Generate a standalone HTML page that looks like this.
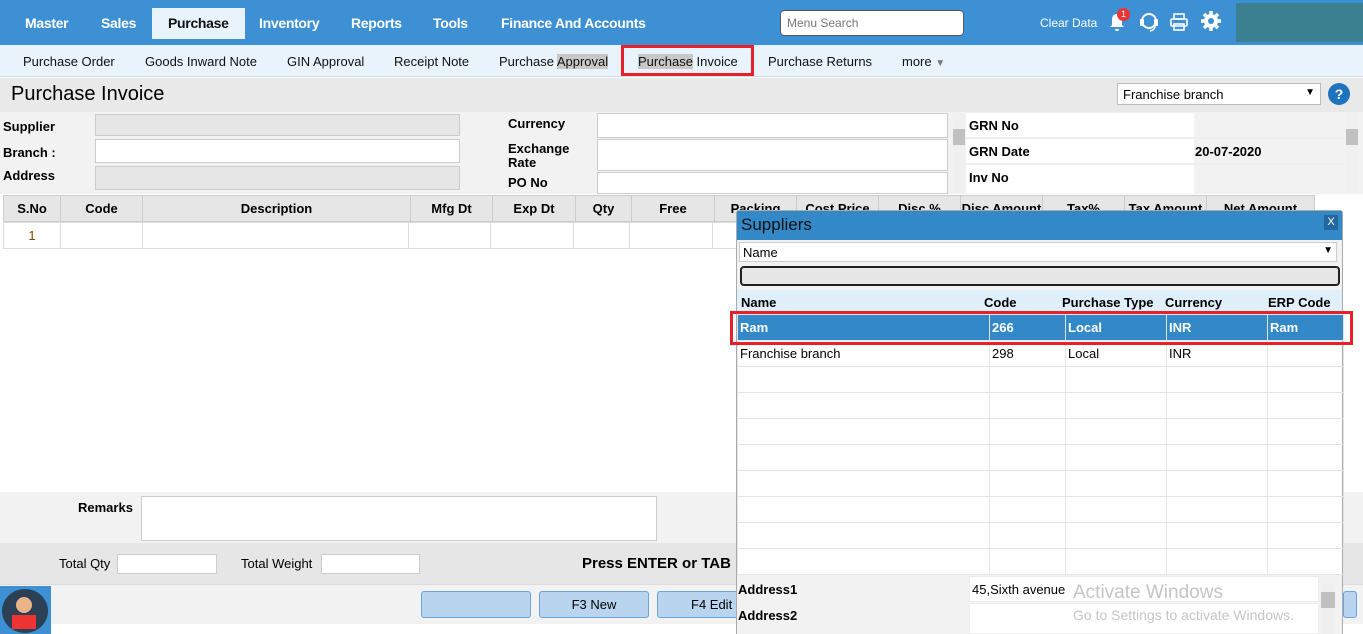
<!DOCTYPE html><html><head><style>
*{box-sizing:border-box;margin:0;padding:0}
body{width:1363px;height:634px;overflow:hidden;position:relative;font-family:"Liberation Sans",Arial,sans-serif;font-size:13px;background:#fff;color:#000}
.a{position:absolute}
.nav{left:0;top:0;width:1363px;height:45px;background:#3d90d4}
.nav span{position:absolute;top:15px;color:#fff;font-weight:bold;font-size:14px;letter-spacing:-0.3px}
.sub{left:0;top:45px;width:1363px;height:32px;background:#e8f3fb;border-bottom:1px solid #c8dcea}
.sub span{position:absolute;top:9px;font-size:13px;color:#111}
.lbl{font-weight:bold;font-size:13px}
.inp{background:#fff;border:1px solid #ccc}
.g{background:#e6e6e6}
table{border-collapse:collapse}
.th td{border:1px solid #ccc;text-align:center;font-weight:bold;height:26px}
.mt td{border:1px solid #e4e4e4;height:26px;padding-left:2px;font-size:13px}
</style></head><body>
<div class="a nav">
<span style="left:25px">Master</span><span style="left:101px">Sales</span>
<div class="a" style="left:152px;top:8px;width:93px;height:31px;background:#e8f3fb"></div>
<span style="left:168px;color:#111">Purchase</span>
<span style="left:259px">Inventory</span><span style="left:351px">Reports</span><span style="left:433px">Tools</span><span style="left:501px">Finance And Accounts</span>
<div class="a" style="left:780px;top:10px;width:184px;height:26px;background:#fff;border:1px solid #555;border-radius:4px;color:#777;font-size:12px;padding:5px 6px">Menu Search</div>
<span style="left:1040px;font-weight:normal;font-size:12px;top:16px;letter-spacing:0">Clear Data</span>
<svg class="a" style="left:1107px;top:11px" width="20" height="22" viewBox="0 0 20 22"><path d="M10 3c-4 0-5 3-5 6v5l-2 2h14l-2-2V9c0-3-1-6-5-6zM8 18a2 2 0 004 0z" fill="#fff"/></svg>
<div class="a" style="left:1117px;top:8px;width:13px;height:13px;border-radius:50%;background:#e33;color:#fff;font-size:9px;text-align:center;line-height:13px">1</div>
<svg class="a" style="left:1138px;top:11px" width="22" height="22" viewBox="0 0 22 22"><circle cx="11" cy="10" r="7" fill="none" stroke="#fff" stroke-width="2"/><rect x="2" y="8" width="4" height="7" rx="1" fill="#fff"/><rect x="16" y="8" width="4" height="7" rx="1" fill="#fff"/><path d="M17 15q0 4-5 5" stroke="#fff" fill="none" stroke-width="1.5"/></svg>
<svg class="a" style="left:1170px;top:13px" width="18" height="18" viewBox="0 0 18 18"><rect x="4" y="1" width="10" height="5" fill="none" stroke="#fff" stroke-width="1.6"/><rect x="1" y="6" width="16" height="7" rx="1" fill="none" stroke="#fff" stroke-width="1.6"/><rect x="4" y="11" width="10" height="6" fill="none" stroke="#fff" stroke-width="1.6"/></svg>
<svg class="a" style="left:1200px;top:10px" width="22" height="22" viewBox="0 0 22 22"><circle cx="11" cy="11" r="7" fill="#fff"/><g stroke="#fff" stroke-width="3.5"><path d="M11 1v20M1 11h20M4 4l14 14M18 4L4 18"/></g><circle cx="11" cy="11" r="3" fill="#3d90d4"/></svg>
<div class="a" style="left:1236px;top:3px;width:127px;height:39px;background:#3b8090"></div>
</div>
<div class="a sub">
<span style="left:23px">Purchase Order</span><span style="left:145px">Goods Inward Note</span><span style="left:287px">GIN Approval</span><span style="left:394px">Receipt Note</span>
<span style="left:499px">Purchase <b style="font-weight:normal;background:#c8c8c8">Approval</b></span>
<div class="a" style="left:621px;top:0;width:133px;height:31px;border:3px solid #e8202a"></div>
<span style="left:638px"><b style="font-weight:normal;background:#c8c8c8">Purchase</b> Invoice</span>
<span style="left:768px">Purchase Returns</span><span style="left:902px">more <span style="position:static;color:#777;font-size:10px">▼</span></span>
</div>
<div class="a" style="left:0;top:78px;width:1363px;height:34px;background:#e9e9e9"></div>
<div class="a" style="left:11px;top:83px;font-size:20px">Purchase Invoice</div>
<div class="a" style="left:1117px;top:83px;width:204px;height:22px;background:#fff;border:1px solid #bbb;padding:3px 5px;font-size:13px">Franchise branch<span style="float:right;font-size:10px">▼</span></div>
<div class="a" style="left:1328px;top:83px;width:22px;height:22px;border-radius:50%;background:#1e73be;color:#fff;font-weight:bold;text-align:center;line-height:22px;font-size:14px">?</div>
<div class="a" style="left:0;top:112px;width:1363px;height:82px;background:#f2f2f2"></div>
<div class="a lbl" style="left:3px;top:119px">Supplier</div><div class="a lbl" style="left:3px;top:145px">Branch :</div><div class="a lbl" style="left:3px;top:168px">Address</div>
<div class="a g" style="left:95px;top:114px;width:365px;height:22px;border:1px solid #ccc"></div>
<div class="a inp" style="left:95px;top:139px;width:365px;height:24px"></div>
<div class="a g" style="left:95px;top:166px;width:365px;height:24px;border:1px solid #ccc"></div>
<div class="a lbl" style="left:508px;top:116px">Currency</div><div class="a lbl" style="left:508px;top:142px;line-height:14px">Exchange<br>Rate</div><div class="a lbl" style="left:508px;top:175px">PO No</div>
<div class="a inp" style="left:597px;top:113px;width:351px;height:25px"></div>
<div class="a inp" style="left:597px;top:139px;width:351px;height:32px"></div>
<div class="a inp" style="left:597px;top:172px;width:351px;height:22px"></div>
<div class="a" style="left:953px;top:113px;width:12px;height:80px;background:#f0f0f0"><div style="margin-top:16px;height:16px;background:#c1c1c1"></div></div>
<div class="a" style="left:966px;top:113px;width:228px;height:80px;background:#fff"></div>
<div class="a" style="left:966px;top:137px;width:378px;height:2px;background:#eee"></div><div class="a" style="left:966px;top:163px;width:378px;height:2px;background:#eee"></div>
<div class="a lbl" style="left:969px;top:118px">GRN No</div><div class="a lbl" style="left:969px;top:144px">GRN Date</div><div class="a lbl" style="left:969px;top:170px">Inv No</div>
<div class="a lbl" style="left:1195px;top:144px">20-07-2020</div>
<div class="a" style="left:1346px;top:113px;width:12px;height:80px;background:#f0f0f0"><div style="margin-top:16px;height:16px;background:#c1c1c1"></div></div>
<table class="a th" style="left:3px;top:195px;background:#e6e6e6;font-size:13px">
<tr><td style="width:57px">S.No</td><td style="width:82px">Code</td><td style="width:268px">Description</td><td style="width:82px">Mfg Dt</td><td style="width:83px">Exp Dt</td><td style="width:56px">Qty</td><td style="width:83px">Free</td><td style="width:82px">Packing</td><td style="width:82px">Cost Price</td><td style="width:82px">Disc %</td><td style="width:82px">Disc Amount</td><td style="width:82px">Tax%</td><td style="width:82px">Tax Amount</td><td style="width:108px">Net Amount</td></tr></table>
<table class="a" style="left:3px;top:222px;border-collapse:collapse"><tr style="height:26px"><td style="width:57px;border:1px solid #ddd;text-align:center;color:#7a4a00">1</td><td style="width:82px;border:1px solid #ddd"></td><td style="width:266px;border:1px solid #ddd"></td><td style="width:82px;border:1px solid #ddd"></td><td style="width:83px;border:1px solid #ddd"></td><td style="width:56px;border:1px solid #ddd"></td><td style="width:83px;border:1px solid #ddd"></td><td style="width:30px;border:1px solid #ddd"></td></tr></table>
<div class="a" style="left:0;top:492px;width:1363px;height:51px;background:#f2f2f2"></div>
<div class="a lbl" style="left:78px;top:500px">Remarks</div>
<div class="a inp" style="left:141px;top:496px;width:516px;height:45px"></div>
<div class="a" style="left:0;top:543px;width:1363px;height:41px;background:#e6e6e6"></div>
<div class="a" style="left:59px;top:556px">Total Qty</div><div class="a inp" style="left:117px;top:554px;width:100px;height:20px"></div>
<div class="a" style="left:241px;top:556px">Total Weight</div><div class="a inp" style="left:321px;top:554px;width:99px;height:20px"></div>
<div class="a" style="left:582px;top:555px;font-weight:bold;font-size:15px">Press ENTER or TAB</div>
<div class="a" style="left:0;top:584px;width:1363px;height:40px;background:#f2f2f2;border-top:1px solid #ddd"></div>
<div class="a" style="left:421px;top:591px;width:110px;height:27px;background:#b8d4ee;border:1px solid #6aa6dd;border-radius:3px"></div>
<div class="a" style="left:539px;top:591px;width:110px;height:27px;background:#b8d4ee;border:1px solid #6aa6dd;border-radius:3px;text-align:center;line-height:25px;font-size:13px">F3 New</div>
<div class="a" style="left:657px;top:591px;width:110px;height:27px;background:#b8d4ee;border:1px solid #6aa6dd;border-radius:3px;padding-left:33px;line-height:25px">F4 Edit</div>
<div class="a" style="left:1343px;top:591px;width:14px;height:27px;background:#b8d4ee;border:1px solid #6aa6dd;border-radius:3px"></div>
<div class="a" style="left:0;top:586px;width:51px;height:48px;background:#3d90d4"><div style="margin:3px 2px;width:46px;height:44px;border-radius:50%;background:#2b3f55"><div style="position:relative;left:14px;top:8px;width:16px;height:16px;border-radius:50%;background:#e9b48a"></div><div style="position:relative;left:10px;top:10px;width:24px;height:14px;background:#e33"></div></div></div>
<div class="a" style="left:736px;top:210px;width:607px;height:424px;background:#fff;border:1px solid #aaa;border-radius:3px 3px 0 0"></div>
<div class="a" style="left:737px;top:211px;width:605px;height:29px;background:#3388c8;font-size:17px;padding:4px 4px;color:#111">Suppliers</div>
<div class="a" style="left:1324px;top:215px;width:14px;height:15px;background:#2466a0;color:#fff;font-size:11px;text-align:center;line-height:15px">X</div>
<div class="a" style="left:737px;top:240px;width:605px;height:50px;background:#f2f2f2"></div>
<div class="a" style="left:739px;top:242px;width:598px;height:20px;background:#fff;border:1px solid #ccc;padding:2px 3px">Name<span style="float:right;font-size:10px">▼</span></div>
<div class="a" style="left:740px;top:266px;width:600px;height:20px;background:#e6e6e6;border:2px solid #222;border-radius:4px"></div>
<div class="a" style="left:737px;top:290px;width:605px;height:25px;background:#dff0fb"></div>
<div class="a lbl" style="left:741px;top:295px">Name</div><div class="a lbl" style="left:984px;top:295px">Code</div><div class="a lbl" style="left:1062px;top:295px">Purchase Type</div><div class="a lbl" style="left:1165px;top:295px">Currency</div><div class="a lbl" style="left:1268px;top:295px">ERP Code</div>
<table class="a mt" style="left:737px;top:314px">
<tr style="background:#3388c8;color:#fff;font-weight:bold"><td style="width:252px">Ram</td><td style="width:76px">266</td><td style="width:101px">Local</td><td style="width:101px">INR</td><td style="width:76px">Ram</td></tr>
<tr><td>Franchise branch</td><td>298</td><td>Local</td><td>INR</td><td></td></tr>
<tr><td></td><td></td><td></td><td></td><td></td></tr><tr><td></td><td></td><td></td><td></td><td></td></tr><tr><td></td><td></td><td></td><td></td><td></td></tr><tr><td></td><td></td><td></td><td></td><td></td></tr><tr><td></td><td></td><td></td><td></td><td></td></tr><tr><td></td><td></td><td></td><td></td><td></td></tr><tr><td></td><td></td><td></td><td></td><td></td></tr><tr><td></td><td></td><td></td><td></td><td></td></tr>
</table>
<div class="a" style="left:730px;top:311px;width:623px;height:34px;border:3px solid #e8202a"></div>
<div class="a" style="left:737px;top:575px;width:605px;height:59px;background:#f2f2f2"></div>
<div class="a inp" style="left:969px;top:576px;width:350px;height:26px;border-color:#eee"></div>
<div class="a inp" style="left:969px;top:603px;width:350px;height:31px;border-color:#eee"></div>
<div class="a lbl" style="left:738px;top:582px">Address1</div><div class="a lbl" style="left:738px;top:608px">Address2</div>
<div class="a" style="left:972px;top:582px">45,Sixth avenue</div>
<div class="a" style="left:1073px;top:582px;font-size:19px;color:#c5c5c5">Activate Windows</div>
<div class="a" style="left:1073px;top:607px;font-size:14px;color:#c5c5c5">Go to Settings to activate Windows.</div>
<div class="a" style="left:1321px;top:577px;width:14px;height:57px;background:#f0f0f0"><div style="margin-top:15px;height:16px;background:#c1c1c1"></div></div>
</body></html>
